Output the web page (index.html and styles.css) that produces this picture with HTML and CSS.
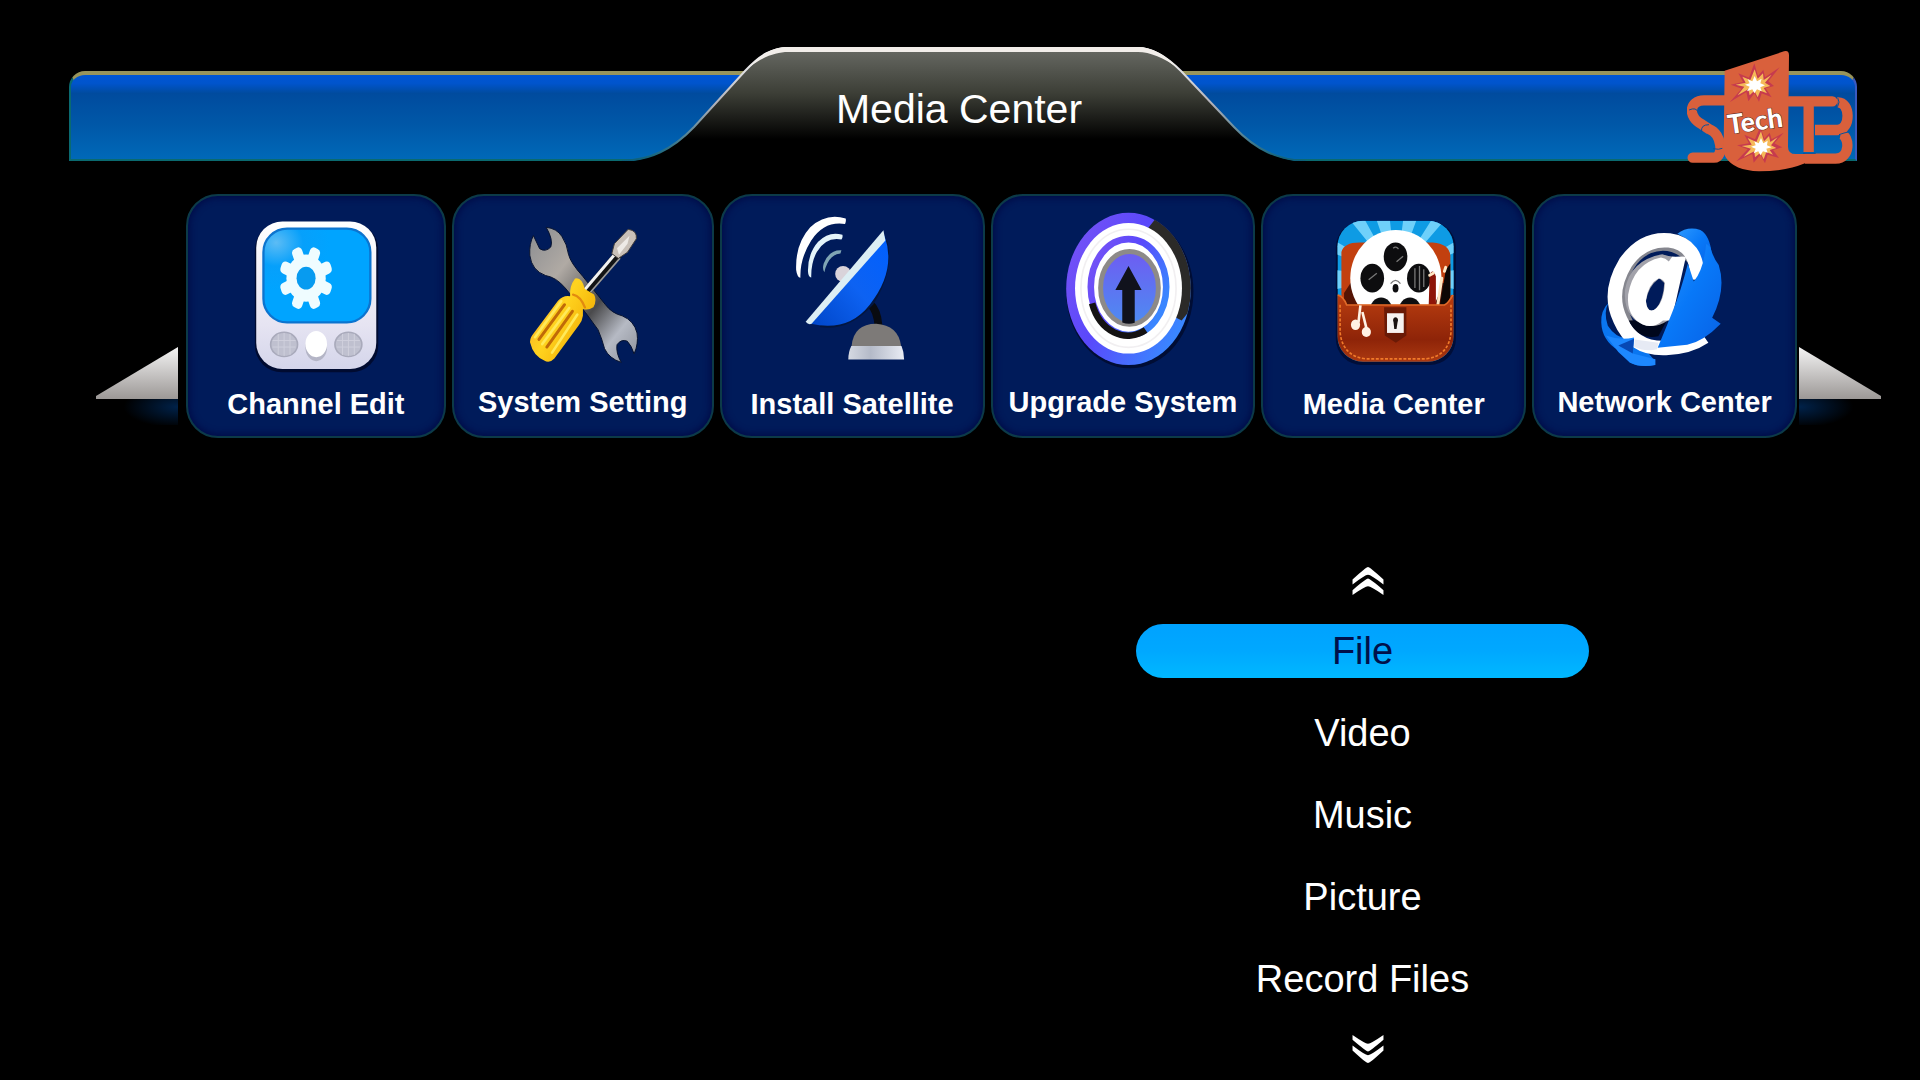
FILE: index.html
```html
<!DOCTYPE html>
<html lang="en">
<head>
    <meta charset="UTF-8">
    <meta name="viewport" content="width=device-width, initial-scale=1.0">
    <title>Media Center</title>
    <link rel="stylesheet" href="styles.css">
</head>
<body>
    <header class="header">
        <div class="bar"></div>
        <svg class="tab" viewBox="616 45 694 116" aria-hidden="true">
            <defs>
                <linearGradient id="tabFill" x1="0" y1="0" x2="0" y2="1">
                    <stop offset="0" stop-color="#686a64"/>
                    <stop offset="0.4" stop-color="#3c3e36"/>
                    <stop offset="0.8" stop-color="#000"/>
                </linearGradient>
                <linearGradient id="tabEdge" x1="0" y1="0" x2="0" y2="1">
                    <stop offset="0" stop-color="#fff"/>
                    <stop offset="0.5" stop-color="#b0b0b8"/>
                    <stop offset="1" stop-color="#0a5f78"/>
                </linearGradient>
            </defs>
            <path fill="url(#tabFill)" d="M622 162C650 160 672 150 694 127L745 71C760 55 772 48 788 48H1138C1152 48 1166 56 1181 71L1234 127C1256 150 1278 160 1306 162Z"/>
            <path fill="none" stroke="url(#tabEdge)" stroke-width="2" d="M622 161C650 160 672 150 694 127L745 71C760 55 772 48 788 48H1138C1152 48 1166 56 1181 71L1234 127C1256 150 1278 160 1306 161"/>
            <path fill="#f2eeea" d="M748 68C762 53 774 47 788 47H1138C1150 47 1164 53 1178 68C1164 58 1150 52 1138 52H788C776 52 762 57 748 68Z"/>
        </svg>
        <h1 class="title">Media Center</h1>

        <svg class="logo" viewBox="84 60 498 366" role="img" aria-label="STB Tech">
            <g fill="none" stroke="#d9603c" stroke-width="31">
                <path stroke-linecap="round" d="M200 211H135C90 211 85 262 130 284L150 297C190 312 195 383 165 383H101"/>
                <path stroke-linecap="round" d="M390 214H520"/>
                <path d="M449 214V366"/>
                <path d="M468 300H535C577 300 575 214 535 217"/>
                <path d="M438 386H530C574 386 574 318 545 312"/>
            </g>
            <g fill="none" stroke="#07529e" stroke-width="3">
                <path d="M90 240Q112 230 118 248M128 306Q124 284 150 284M162 356Q180 360 190 355M536 230Q544 216 536 203M540 314Q556 308 568 306M432 370H470"/>
            </g>
            <path fill="#d9603c" d="M197 122L375 64Q390 60 390 76L387 350Q387 372 410 372H438V400Q380 424 300 424Q225 422 200 382Q188 365 194 345Z"/>
            <path fill="#c63a4e" d="M286 100L297 138L313 119L318 142L362 112L328 154L345 168L320 175L338 202L308 190L300 215L286 190L268 214L262 186L212 217L248 176L215 164L252 156L238 130L270 143Z"/>
            <path fill="#f5b958" d="M287 118L296 146L312 130L314 150L338 134L318 158L334 168L314 174L324 190L304 182L296 202L286 182L272 196L268 178L236 196L256 170L230 164L260 158L250 140L274 150Z"/>
            <path fill="#fff" d="M287 138L294 154L308 146L304 160L318 166L304 172L308 184L294 178L286 190L280 178L264 184L272 170L258 164L272 160L266 148L280 154Z"/>
            <path fill="#c63a4e" d="M304 290L316 326L332 308L338 328L374 308L346 340L370 352L342 360L360 384L326 374L318 400L304 374L284 398L280 372L232 394L266 358L234 346L270 340L256 314L288 328Z"/>
            <path fill="#f5b958" d="M306 304L315 334L330 318L334 336L356 322L336 346L352 354L332 360L342 374L322 366L314 388L304 368L288 382L286 364L254 380L276 356L248 348L278 344L266 324L292 336Z"/>
            <path fill="#fff" d="M306 324L313 340L326 332L324 346L338 352L322 356L326 368L312 364L304 376L298 364L284 370L290 356L276 350L290 346L286 334L299 340Z"/>
            <text class="logo-text" x="210" y="313" transform="rotate(-8 210 313)">Tech</text>
        </svg>
    </header>

    <nav class="carousel" aria-label="Main menu">
        <svg class="wing" viewBox="0 0 82 80" aria-hidden="true">
            <defs>
                <linearGradient id="wingFill" x1="0" y1="0" x2="0" y2="1">
                    <stop offset="0" stop-color="#f4f4f4"/>
                    <stop offset="1" stop-color="#9c9896"/>
                </linearGradient>
                <radialGradient id="wingShadow" cx="1" cy="0.3" r="0.8">
                    <stop offset="0" stop-color="#00224a"/>
                    <stop offset="1" stop-color="#000"/>
                </radialGradient>
            </defs>
            <path fill="url(#wingShadow)" d="M14 52H82V78H30Z"/>
            <path fill="url(#wingFill)" d="M0 49L82 0V52H0Z"/>
        </svg>

        <div class="cards">
            <button class="card" type="button">
                <svg class="icon" viewBox="317 43 780 561" aria-hidden="true">
                    <defs>
                        <linearGradient id="deviceBody" x1="0" y1="0" x2="0" y2="1">
                            <stop offset="0" stop-color="#fff"/>
                            <stop offset="0.7" stop-color="#e6e4f2"/>
                            <stop offset="1" stop-color="#d4d5ea"/>
                        </linearGradient>
                        <radialGradient id="screenFill" cx="0.12" cy="0.15" r="0.5">
                            <stop offset="0" stop-color="#5cbcf5"/>
                            <stop offset="0.5" stop-color="#06a0fb"/>
                            <stop offset="1" stop-color="#00a4ff"/>
                        </radialGradient>
                    </defs>
                    <rect x="521" y="126" width="376" height="456" rx="82" fill="#000b30"/>
                    <rect x="525" y="122" width="366" height="450" rx="80" fill="url(#deviceBody)"/>
                    <rect x="547" y="144" width="326" height="286" rx="72" fill="url(#screenFill)" stroke="#0c74cf" stroke-width="7"/>
                    <g transform="translate(677 295) scale(1 1.2)" fill="#effcff">
                        <circle r="60"/>
                        <rect x="-16" y="-82" width="32" height="164" rx="12" transform="rotate(22.5)"/>
                        <rect x="-16" y="-82" width="32" height="164" rx="12" transform="rotate(67.5)"/>
                        <rect x="-16" y="-82" width="32" height="164" rx="12" transform="rotate(112.5)"/>
                        <rect x="-16" y="-82" width="32" height="164" rx="12" transform="rotate(157.5)"/>
                        <circle r="29" fill="#079bf0"/>
                    </g>
                    <g fill="#bfc0cf" stroke="#a9aabb" stroke-width="5">
                        <ellipse cx="610" cy="497" rx="41" ry="37"/>
                        <ellipse cx="806" cy="497" rx="41" ry="37"/>
                    </g>
                    <path stroke="#d0d0dc" stroke-width="3" d="M592 465V529M610 462V532M628 465V529M575 485H645M575 505H645M788 465V529M806 462V532M824 465V529M771 485H841M771 505H841"/>
                    <ellipse cx="708" cy="506" rx="33" ry="42" fill="#b4b5c6"/>
                    <ellipse cx="708" cy="496" rx="33" ry="40" fill="#fff"/>
                </svg>
                <span class="label">Channel Edit</span>
            </button>

            <button class="card" type="button">
                <svg class="icon" viewBox="39 43 786 561" aria-hidden="true">
                    <defs>
                        <linearGradient id="steel" x1="0" y1="0" x2="1" y2="1">
                            <stop offset="0" stop-color="#8a8c90"/>
                            <stop offset="0.3" stop-color="#b0aaa4"/>
                            <stop offset="0.6" stop-color="#4a4a4c"/>
                            <stop offset="0.8" stop-color="#b6bac4"/>
                            <stop offset="1" stop-color="#8b8f98"/>
                        </linearGradient>
                        <linearGradient id="handle" x1="0" y1="0" x2="1" y2="0.7">
                            <stop offset="0" stop-color="#f79a2b"/>
                            <stop offset="0.5" stop-color="#ffd31f"/>
                            <stop offset="1" stop-color="#f0a800"/>
                        </linearGradient>
                    </defs>
                    <path fill="url(#steel)" stroke="#06112e" stroke-width="3" d="M281 165L300 205Q318 217 334 200Q342 178 320 140Q352 143 368 168Q384 192 388 222Q394 248 432 290L500 375Q520 402 552 410Q588 425 597 462Q602 496 588 526Q580 500 567 487Q548 480 536 498Q532 522 549 552Q512 540 498 510Q490 480 478 452L440 400L378 325Q350 292 318 287Q276 272 270 225Q268 190 281 165Z"/>
                    <path stroke="#121314" stroke-width="26" d="M438 342L540 222"/>
                    <path stroke="#f2f2f2" stroke-width="9" d="M436 332L532 219"/>
                    <path stroke="#9c9c9c" stroke-width="5" d="M455 338L545 234"/>
                    <path fill="#c9c0b8" stroke="#403c3a" stroke-width="3" d="M528 190L570 146Q598 150 595 175L568 216L540 235L520 220Z"/>
                    <path fill="#eeeae6" d="M536 204L574 166L568 190L542 224Z"/>
                    <path fill="url(#handle)" d="M408 296Q428 290 438 328L466 345Q476 362 464 384Q445 395 432 388L432 410Q430 426 420 438L345 540Q330 556 314 546Q280 530 272 494Q268 482 278 468L356 364Q372 346 393 350Q390 320 408 296Z"/>
                    <path fill="none" stroke="#c06a08" stroke-width="9" stroke-linecap="round" d="M376 376L298 482M400 396L322 505"/>
                    <path fill="none" stroke="#ffe95a" stroke-width="8" stroke-linecap="round" d="M366 365L286 475M390 386L308 496M415 406L338 522"/>
                    <path fill="none" stroke="#e28a10" stroke-width="7" stroke-linecap="round" d="M402 345Q425 350 438 384"/>
                </svg>
                <span class="label">System Setting</span>
            </button>

            <button class="card" type="button">
                <svg class="icon" viewBox="33 43 795 561" aria-hidden="true">
                    <defs>
                        <linearGradient id="dish" x1="0" y1="1" x2="1" y2="0">
                            <stop offset="0" stop-color="#0046c8"/>
                            <stop offset="0.5" stop-color="#0d62f2"/>
                            <stop offset="1" stop-color="#0060ff"/>
                        </linearGradient>
                        <linearGradient id="foot" x1="0" y1="0" x2="1" y2="0">
                            <stop offset="0" stop-color="#d5d9e2"/>
                            <stop offset="0.4" stop-color="#b4bac8"/>
                            <stop offset="1" stop-color="#e9ecf4"/>
                        </linearGradient>
                    </defs>
                    <path fill="#fff" d="M410 113Q412 122 408 130Q345 120 305 180Q270 235 272 294Q262 292 259 270Q256 190 302 140Q350 95 410 113Z"/>
                    <path fill="#e4f4fa" d="M400 163Q402 170 397 177Q350 168 322 215Q304 248 305 293Q296 292 295 275Q294 220 326 184Q360 150 400 163Z"/>
                    <path fill="#7fa5b4" d="M397 210L394 220Q368 222 354 250Q347 264 345 277Q338 268 343 250Q360 208 397 210Z"/>
                    <path fill="none" stroke="#090b10" stroke-width="24" d="M486 375Q506 392 510 440"/>
                    <path fill="#03163f" d="M536 178Q560 270 494 375Q420 458 330 444Z"/>
                    <path fill="url(#dish)" d="M528 165Q566 270 484 375Q418 460 304 434Z"/>
                    <circle cx="402" cy="282" r="24" fill="#d9d3da"/>
                    <path fill="#dceef4" d="M525 149L531 180L306 434Q296 438 288 428Z"/>
                    <path fill="#7d7a78" d="M428 502Q434 434 503 434Q570 438 579 502Z"/>
                    <path fill="url(#foot)" d="M427 502H580Q588 520 588 543H418Q418 520 427 502Z"/>
                </svg>
                <span class="label">Install Satellite</span>
            </button>

            <button class="card" type="button">
                <svg class="icon" viewBox="33 43 795 561" aria-hidden="true">
                    <defs>
                        <linearGradient id="ring" x1="0" y1="0" x2="1" y2="0.6">
                            <stop offset="0" stop-color="#7b55f5"/>
                            <stop offset="0.5" stop-color="#5a48fb"/>
                            <stop offset="1" stop-color="#3a86ff"/>
                        </linearGradient>
                        <linearGradient id="core" x1="0" y1="0" x2="0" y2="1">
                            <stop offset="0" stop-color="#6e5cf2"/>
                            <stop offset="1" stop-color="#4d8cf2"/>
                        </linearGradient>
                    </defs>
                    <ellipse cx="450" cy="336" rx="194" ry="234" fill="#000d34"/>
                    <ellipse cx="446" cy="328" rx="190" ry="232" fill="url(#ring)"/>
                    <path fill="#2b2a28" d="M526 117A190 232 0 0 1 626 402L608 424L560 400L500 150Z"/>
                    <ellipse cx="446" cy="326" rx="163" ry="199" fill="#fff"/>
                    <ellipse cx="446" cy="326" rx="145" ry="180" fill="none" stroke="#f1eff1" stroke-width="5"/>
                    <ellipse cx="446" cy="322" rx="115" ry="146" fill="#fff" stroke="url(#ring)" stroke-width="20"/>
                    <path fill="none" stroke="#151313" stroke-width="20" d="M335 372A115 146 0 0 0 498 453"/>
                    <ellipse cx="449" cy="325" rx="88" ry="111" fill="url(#core)" stroke="#8d8a88" stroke-width="15"/>
                    <path fill="#10121c" d="M446 258L486 331H465V431Q446 437 427 430V331H406Z"/>
                </svg>
                <span class="label">Upgrade System</span>
            </button>

            <button class="card" type="button">
                <svg class="icon" viewBox="33 43 795 561" aria-hidden="true">
                    <defs>
                        <clipPath id="appShape">
                            <rect x="260" y="120" width="354" height="430" rx="78"/>
                        </clipPath>
                        <linearGradient id="leather" x1="0" y1="0" x2="0" y2="1">
                            <stop offset="0" stop-color="#b93d10"/>
                            <stop offset="0.65" stop-color="#8e2408"/>
                            <stop offset="1" stop-color="#ae3b12"/>
                        </linearGradient>
                    </defs>
                    <rect x="255" y="122" width="366" height="438" rx="80" fill="#000e38"/>
                    <g clip-path="url(#appShape)">
                        <path fill="#0e9be4" d="M260 120H614V550H260Z"/>
                        <path fill="#6fd0fa" d="M438 290L300 120H345ZM438 290L380 120H420ZM438 290L460 120H500ZM438 290L545 120H585ZM438 290L250 180V220ZM438 290L624 180V215ZM438 290L250 270V330ZM438 290L624 270V330Z"/>
                        <path fill="#c2400f" d="M272 380V215Q280 185 330 186H550Q600 190 604 225V380Z"/>
                        <path fill="#541404" d="M280 380V340L300 310H590L604 350V380Z"/>
                        <path fill="#0d0705" d="M572 380L590 270L604 250V380Z"/>
                        <ellipse cx="438" cy="295" rx="139" ry="147" fill="#fff"/>
                        <g fill="#0d0d0f">
                            <ellipse cx="437" cy="230" rx="36" ry="44"/>
                            <ellipse cx="366" cy="295" rx="36" ry="44"/>
                            <ellipse cx="508" cy="295" rx="36" ry="44"/>
                            <ellipse cx="393" cy="392" rx="34" ry="38"/>
                            <ellipse cx="481" cy="392" rx="34" ry="38"/>
                            <ellipse cx="437" cy="326" rx="9" ry="13"/>
                        </g>
                        <path fill="none" stroke="#777" stroke-width="4" d="M422 312Q437 292 452 312M430 204Q437 196 446 206M496 265V325M510 258V332M523 268V322M355 300L380 280M440 245L460 228"/>
                        <path fill="#8e1508" d="M538 378L541 285Q550 262 560 290V378Z"/>
                        <path stroke="#ffe7c4" stroke-width="9" stroke-linecap="round" d="M566 375L578 295M590 262L586 274M541 286L552 280"/>
                        <path fill="url(#leather)" d="M256 346Q278 348 288 376H586Q598 372 606 346H620V556H256Z"/>
                        <path fill="none" stroke="#f07a2a" stroke-width="5" stroke-dasharray="9 5" d="M268 376V460Q275 532 345 541H530Q600 532 606 460V376"/>
                        <path fill="none" stroke="#e06a28" stroke-width="5" d="M260 346Q278 350 288 377H586Q598 372 612 346"/>
                        <path fill="#6a1a06" d="M402 384H470V470L438 492L404 470Z"/>
                        <rect x="411" y="402" width="51" height="60" fill="#f6f2f0"/>
                        <path fill="#1a1210" d="M437 414Q448 416 443 430L440 450H433L431 430Q426 416 437 414Z"/>
                        <path fill="none" stroke="#fff2e4" stroke-width="8" d="M330 378L324 430M336 398L350 455"/>
                        <g fill="#fff2e4">
                            <ellipse cx="315" cy="437" rx="14" ry="16"/>
                            <ellipse cx="348" cy="459" rx="14" ry="15"/>
                        </g>
                    </g>
                </svg>
                <span class="label">Media Center</span>
            </button>

            <button class="card" type="button">
                <svg class="icon" viewBox="33 43 795 561" aria-hidden="true">
                    <defs>
                        <linearGradient id="arrowBlue" x1="0" y1="0" x2="1" y2="1">
                            <stop offset="0" stop-color="#2b98ff"/>
                            <stop offset="0.5" stop-color="#0878f8"/>
                            <stop offset="1" stop-color="#0862e6"/>
                        </linearGradient>
                    </defs>
                    <path fill="#0a76f0" d="M260 370Q244 400 258 440Q290 490 340 474L400 545L400 560Q355 568 325 552L290 515Q240 485 238 430Q236 395 260 370Z"/>
                    <path fill="url(#arrowBlue)" d="M470 160Q500 136 540 148Q570 165 575 225L548 265Q540 190 470 160Z"/>
                    <path fill="none" stroke="#85868e" stroke-width="16" d="M506 240Q450 186 385 212Q316 244 308 340Q306 390 328 430"/>
                    <path fill="none" stroke="#fff" stroke-width="44" d="M530 300Q534 192 445 180Q365 172 312 248Q256 340 296 422Q335 512 435 508Q505 506 552 474"/>
                    <path fill="#00071c" d="M322 424Q350 484 412 472L440 420Z"/>
                    <path fill="#a2a2aa" fill-rule="evenodd" d="M424 222Q462 236 490 226L440 425Q400 452 360 434Q306 410 310 332Q325 240 424 222ZM415 295Q380 320 374 366Q380 405 404 390Q428 360 430 310Z"/>
                    <path fill="#fff" fill-rule="evenodd" d="M420 232Q434 234 444 244L454 230H496L452 424L426 424Q396 450 364 436Q314 412 320 345Q336 250 420 232ZM412 296Q382 312 374 362Q376 400 398 392Q428 375 432 310Q426 296 412 296Z"/>
                    <path fill="url(#arrowBlue)" d="M502 250L520 305Q550 270 558 190L570 200Q580 235 596 255Q620 330 576 416L602 434Q550 488 500 498L410 507Q430 460 454 400Q482 330 502 250Z"/>
                    <path fill="#1d88ff" d="M252 470Q295 486 338 476L334 525L403 542V560Q355 568 325 552L290 520Z"/>
                    <path fill="#0748b4" d="M290 500L338 480L334 525Z"/>
                    <path fill="#e6eaf4" d="M340 482L412 492L408 512Q370 520 338 504Z"/>
                </svg>
                <span class="label">Network Center</span>
            </button>
        </div>

        <svg class="wing" viewBox="0 0 82 80" aria-hidden="true">
            <g transform="matrix(-1 0 0 1 82 0)">
                <path fill="url(#wingShadow)" d="M14 52H82V78H30Z"/>
                <path fill="url(#wingFill)" d="M0 49L82 0V52H0Z"/>
            </g>
        </svg>
    </nav>

    <main class="menu">
        <button class="scroll" type="button" aria-label="Scroll up">
            <svg class="chevrons" viewBox="0 0 34 30" aria-hidden="true">
                <path d="M17 0Q19 0 33 13V18Q20 8 17 8Q14 8 1 18V13Q15 0 17 0ZM17 12Q19 12 33 24V29Q20 20 17 20Q14 20 1 29V24Q15 12 17 12Z"/>
            </svg>
        </button>
        <button class="item active" type="button">File</button>
        <button class="item" type="button">Video</button>
        <button class="item" type="button">Music</button>
        <button class="item" type="button">Picture</button>
        <button class="item" type="button">Record Files</button>
        <button class="scroll" type="button" aria-label="Scroll down">
            <svg class="chevrons" viewBox="0 0 34 30" aria-hidden="true">
                <path transform="matrix(1 0 0 -1 0 30)" d="M17 0Q19 0 33 13V18Q20 8 17 8Q14 8 1 18V13Q15 0 17 0ZM17 12Q19 12 33 24V29Q20 20 17 20Q14 20 1 29V24Q15 12 17 12Z"/>
            </svg>
        </button>
    </main>
</body>
</html>
```
FILE: styles.css
```css
* {
    box-sizing: border-box;
}
body {
    margin: 0;
    padding: 45px 0 0;
    background: #000;
    color: #fff;
    font-family: "Liberation Sans", Arial, sans-serif;
}
button {
    margin: 0;
    padding: 0;
    border: none;
    background: none;
    color: inherit;
    font: inherit;
    cursor: pointer;
}

/* Title bar: blue strip, tab and title share one grid cell */
.header {
    display: grid;
    margin: 0 63px 0 69px;
    position: relative;
}
.bar,
.tab,
.title {
    grid-area: 1 / 1;
}
.bar {
    align-self: end;
    height: 90px;
    border: 2px solid #0a6a70;
    border-top: 4px solid #98945a;
    border-right-color: #3a5ac0;
    border-radius: 16px 16px 0 0;
    background: linear-gradient(#0056d4, #0054cc 10%, #004b9e 22%, #0058a8 60%, #0069b8);
}
.tab {
    justify-self: center;
    width: 694px;
    height: 116px;
}
.title {
    margin: 0;
    padding: 12px 8px 0 0;
    align-self: center;
    text-align: center;
    font-size: 41px;
    line-height: 48px;
    font-weight: normal;
}
.logo {
    position: absolute;
    top: 5px;
    right: 4px;
    width: 166px;
    height: 122px;
}
.logo-text {
    font-family: Lato, sans-serif;
    font-size: 80px;
    font-weight: 900;
    fill: #fff;
    stroke: #5a2418;
    stroke-width: 3px;
    paint-order: stroke;
}

.carousel {
    display: flex;
    align-items: flex-end;
    margin: 33px 39px 0 96px;
}
.wing {
    flex: none;
    width: 82px;
    height: 80px;
    margin-bottom: 11px;
}
.cards {
    flex: 1;
    display: grid;
    grid-template-columns: 260fr 262fr 265fr 265fr 265fr 265fr;
    gap: 6px;
    margin: 0 2px 0 8px;
}
.card {
    display: flex;
    flex-direction: column;
    min-width: 0;
    height: 244px;
    border: 2px solid #0c3a48;
    border-radius: 32px;
    background: #001b5a;
    box-shadow: inset 0 0 6px 2px #000c48;
}
.icon {
    width: 100%;
    height: 187px;
    margin-top: -2px;
}
.label {
    width: 100%;
    font-size: 29px;
    line-height: 46px;
    font-weight: bold;
    text-align: center;
    white-space: nowrap;
}
.card:nth-child(even) .label {
    line-height: 42px;
}

.menu {
    display: flex;
    flex-direction: column;
    gap: 28px;
    width: 453px;
    margin: 129px 331px 0 auto;
}
.scroll {
    display: flex;
    justify-content: center;
    padding-left: 10px;
}
.chevrons {
    width: 34px;
    height: 29px;
    fill: #fff;
}
.item {
    height: 54px;
    border-radius: 27px;
    font-size: 38px;
    line-height: 52px;
    text-align: center;
}
.item.active {
    background: linear-gradient(#00a2ff, #00a8ff 50%, #00b8ff);
    color: #00104a;
}
```
